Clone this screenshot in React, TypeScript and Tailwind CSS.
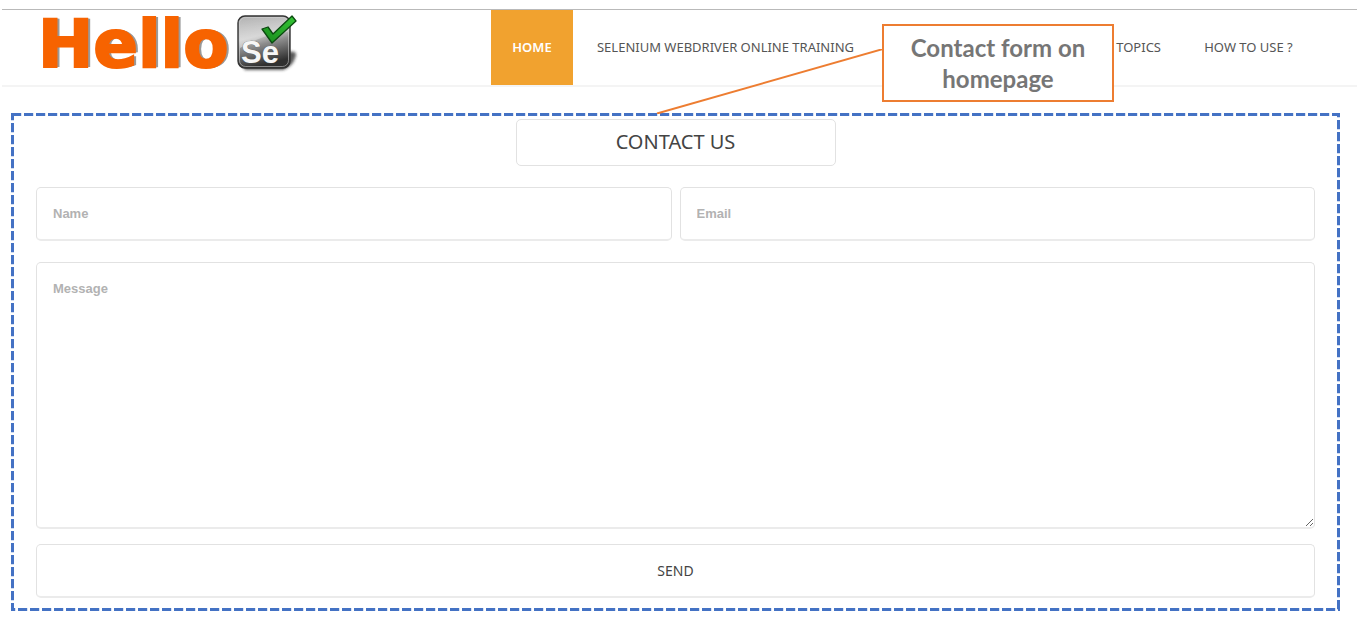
// ── Contact page ───────────────────────────────────────────

const field =
  "w-full rounded-[5px] border border-b-2 border-[#e2e2e2] border-b-[#ebebeb] bg-white px-4 font-['Liberation_Sans',sans-serif] text-[13px] font-bold text-[#444] placeholder:text-[#b2b2b2] placeholder:opacity-100 outline-none";

function SeBadge() {
  return (
    <svg className="mt-0.5 ml-1 h-16 w-[66px]" viewBox="0 0 66 64" aria-hidden="true">
      <defs>
        <linearGradient id="box" x1="0" y1="0" x2="0.25" y2="1">
          <stop offset="0" stopColor="#a9a9a9" />
          <stop offset="0.45" stopColor="#c6c6c6" />
          <stop offset="0.62" stopColor="#8c8c8c" />
          <stop offset="1" stopColor="#303030" />
        </linearGradient>
        <linearGradient id="gloss" x1="0" y1="0" x2="0" y2="1">
          <stop offset="0" stopColor="#fff" stopOpacity="0.1" />
          <stop offset="1" stopColor="#fff" stopOpacity="0.45" />
        </linearGradient>
        <linearGradient id="tick" x1="1" y1="0" x2="0" y2="1">
          <stop offset="0" stopColor="#35c635" />
          <stop offset="1" stopColor="#178a1c" />
        </linearGradient>
        <filter id="soft" x="-30%" y="-30%" width="160%" height="160%">
          <feGaussianBlur stdDeviation="1.6" />
        </filter>
      </defs>
      <path d="M10 54L54 40Q66 38 62 46Q60 54 50 58L12 58Z" fill="#222" opacity="0.75" filter="url(#soft)" />
      <rect x="5" y="4" width="52" height="52" rx="7" fill="url(#box)" stroke="#333" strokeWidth="1.4" />
      <path d="M7 12Q7 6 13 6H49Q55 6 55 12V20Q30 22 7 36Z" fill="url(#gloss)" />
      <rect x="6.5" y="5.5" width="49" height="49" rx="6" fill="none" stroke="#ddd" strokeOpacity="0.5" />
      <text x="8" y="51" fill="#f6f6f6" stroke="#555" strokeWidth="0.6" paintOrder="stroke" fontFamily="Liberation Sans, sans-serif" fontSize="31" fontWeight="700">
        Se
      </text>
      <path d="M29 17L35 15L40 22L59 4L63 9L39 31Z" fill="url(#tick)" stroke="#0b4a10" strokeWidth="1.3" strokeLinejoin="round" />
    </svg>
  );
}

function Header() {
  const item = "flex items-center justify-center text-[#555]";
  return (
    <header className="relative ml-0.5 flex h-[78px] justify-between border-t border-b-2 border-t-[#b9b9b9] border-b-[#f4f4f4] bg-white">
      <a href="#home" className="ml-9 flex items-start" aria-label="Hello Se">
        <span className="font-['DejaVu_Sans',sans-serif] text-[66px] leading-[70px] font-bold text-[#f76300] [-webkit-text-stroke:2px_#f76300] [text-shadow:2px_0_0_#999,3px_0_0_#999]">Hello</span>
        <SeBadge />
      </a>
      <nav className="mr-[42px] flex text-[13px] whitespace-nowrap">
        <a href="#home" className="flex w-[82px] items-center justify-center bg-[#f1a22f] font-semibold text-white">HOME</a>
        <a href="#training" className={`${item} w-[305px]`}>SELENIUM WEBDRIVER ONLINE TRAINING</a>
        <a href="#topics" className="flex w-[304px] items-center justify-end pr-[21px] text-[#555]">TOPICS</a>
        <a href="#how" className={`${item} w-[133px]`}>HOW TO USE ?</a>
      </nav>
    </header>
  );
}

function DashedFrame() {
  return (
    <svg className="pointer-events-none absolute inset-0 h-full w-full" stroke="#4472c4" strokeWidth="6" strokeDasharray="9.2 2.8" aria-hidden="true">
      <line x1="-11" y1="0" x2="100%" y2="0" />
      <line x1="0" y1="-2" x2="0" y2="100%" />
      <line x1="100%" y1="-5" x2="100%" y2="100%" />
      <line x1="-5" y1="100%" x2="100%" y2="100%" />
    </svg>
  );
}

function Callout() {
  return (
    <>
      <svg className="pointer-events-none absolute top-[49px] right-[474px] h-[65px] w-[227px]" viewBox="0 0 227 65" aria-hidden="true">
        <line x1="1" y1="64.5" x2="227" y2="0" stroke="#ed7d31" strokeWidth="2" />
      </svg>
      <div className="absolute top-6 right-[243px] flex h-[78px] w-[232px] items-center justify-center border-2 border-[#ed7d31] bg-white px-5 text-center font-['Lato',sans-serif] text-2xl leading-[31px] font-bold text-[#767676]">
        Contact form on homepage
      </div>
    </>
  );
}

export default function App() {
  return (
    <div className="relative bg-white pt-[9px] pb-2 font-['Noto_Sans',sans-serif]">
      <Header />
      <main className="relative mt-[26px] mr-[17px] ml-[11px] pt-1.5 pr-[25px] pb-[13px] pl-[25px]">
        <DashedFrame />
        <h1 className="mx-auto h-[47px] w-80 rounded-[5px] border border-[#e2e2e2] text-center text-xl leading-[43px] text-[#444]">CONTACT US</h1>
        <form className="mt-[21px]" onSubmit={e => e.preventDefault()}>
          <div className="grid grid-cols-2 gap-2">
            <input type="text" aria-label="Name" placeholder="Name" className={`${field} h-[54px]`} />
            <input type="email" aria-label="Email" placeholder="Email" className={`${field} h-[54px]`} />
          </div>
          <textarea aria-label="Message" placeholder="Message" className={`${field} mt-[21px] block h-[267px] resize py-4`} />
          <button type="submit" className="mt-[15px] block h-[54px] w-full rounded-[5px] border border-b-2 border-[#e2e2e2] border-b-[#ebebeb] bg-white text-sm text-[#444]">SEND</button>
        </form>
      </main>
      <Callout />
    </div>
  );
}
